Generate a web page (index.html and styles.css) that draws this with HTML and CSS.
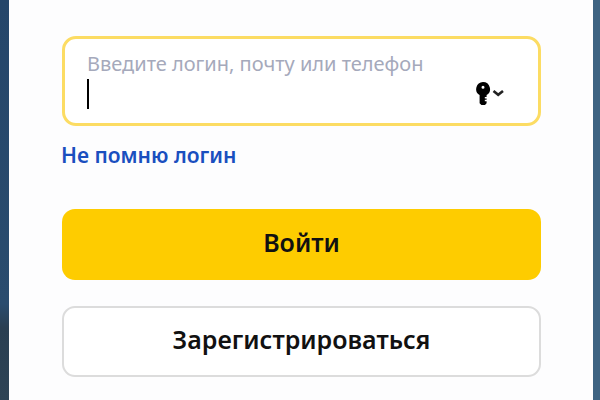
FILE: index.html
```html
<!doctype html>
<html lang="ru">
<head>
    <meta charset="UTF-8">
    <title>Войти</title>
    <link rel="stylesheet" href="styles.css">
</head>
<body>
    <div class="card">
        <div class="field">
            <div class="fieldLabel">Введите логин, почту или телефон</div>
            <div class="fieldRow">
                <span class="caret"></span>
                <svg class="keyIcon" width="29" height="24" viewBox="0 0 29 24">
                    <path fill="#000" fill-rule="evenodd" d="M7 0a7 7 0 0 1 3.6 13v2H8.8v1.5h1.8v1.3H8.8v1.5h1.8v2L9 23H5.4L3.6 21.2V13A7 7 0 0 1 7 0zm0 3.8a1.5 1.5 0 1 0 0 3 1.5 1.5 0 0 0 0-3z"/>
                    <path fill="none" stroke="#222" stroke-width="2.6" d="M17.5 9l4.7 3.8L27 9"/>
                </svg>
            </div>
        </div>
        <a class="forgot" href="#">Не помню логин</a>
        <button class="btn btnMain">Войти</button>
        <button class="btn btnOutline">Зарегистрироваться</button>
    </div>
</body>
</html>
```

FILE: styles.css
```css
html,body{
    margin: 0;
    height: 100%;
}
body{
    width: 600px;
    height: 400px;
    overflow: hidden;
    background: linear-gradient(180deg,#25466a 0,#2a4c6e 76%,#2a3f52 82%,#2e4355 100%) left top / 50% 100% no-repeat, #3e6382;
    font-family: "Noto Sans","Open Sans",sans-serif;
}
.card{
    display: flex;
    flex-direction: column;
    box-sizing: border-box;
    width: 584px;
    height: 400px;
    margin-left: 9px;
    padding: 36px 52px 0 53px;
    background-color: #fdfdfe;
}
.field{
    box-sizing: border-box;
    height: 90px;
    padding: 12px 33px 0 22px;
    border: 3px solid #fcdc63;
    border-radius: 14px;
    background-color: #fff;
}
.fieldLabel{
    height: 29px;
    font-size: 20px;
    line-height: 26px;
    color: #a5a9bb;
    white-space: nowrap;
}
.fieldRow{
    display: flex;
    justify-content: space-between;
    align-items: flex-start;
}
.caret{
    width: 2px;
    height: 30px;
    margin-top: -1px;
    background-color: #000;
}
.keyIcon{
    margin-top: 2px;
}
.forgot{
    margin: 15px 0 0 -1px;
    font-size: 21px;
    line-height: 28px;
    font-weight: 600;
    color: #1a4fbf;
    text-decoration: none;
}
.btn{
    display: block;
    box-sizing: border-box;
    width: 100%;
    height: 71px;
    padding: 0 0 5px;
    border-radius: 13px;
    font-family: inherit;
    font-size: 25px;
    font-weight: 600;
    color: #111;
    cursor: pointer;
}
.btnMain{
    margin-top: 40px;
    border: 0;
    background-color: #fecc00;
}
.btnOutline{
    margin-top: 26px;
    border: 2px solid #dcdcdc;
    background-color: #fff;
}
```
